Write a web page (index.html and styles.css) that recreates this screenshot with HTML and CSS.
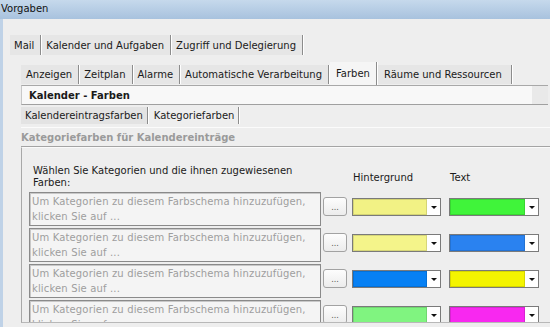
FILE: index.html
```html
<!DOCTYPE html>
<html lang="de">
  <head>
    <meta charset="UTF-8" />
    <title>Vorgaben</title>
    <link rel="stylesheet" href="styles.css">
  </head>
  <body>
    <div class="titlebar">Vorgaben</div>
    <div class="window">
      <div class="tabs tabs-main">
        <span class="tab">Mail</span>
        <span class="tab">Kalender und Aufgaben</span>
        <span class="tab">Zugriff und Delegierung</span>
      </div>
      <div class="tabs tabs-sub">
        <span class="tab">Anzeigen</span>
        <span class="tab">Zeitplan</span>
        <span class="tab">Alarme</span>
        <span class="tab">Automatische Verarbeitung</span>
        <span class="tab active">Farben</span>
        <span class="tab wide">Räume und Ressourcen</span>
      </div>
      <div class="header">Kalender - Farben</div>
      <div class="tabs tabs-third">
        <span class="tab dark">Kalendereintragsfarben</span>
        <span class="tab">Kategoriefarben</span>
      </div>
      <div class="section-label">Kategoriefarben für Kalendereinträge</div>
      <div class="panel">
        <div class="panel-head">
          <p class="intro">Wählen Sie Kategorien und die ihnen zugewiesenen Farben:</p>
          <span class="col-bg">Hintergrund</span>
          <span class="col-text">Text</span>
        </div>
        <div class="rows">
          <div class="row">
            <div class="textbox">Um Kategorien zu diesem Farbschema hinzuzufügen, klicken Sie auf ...</div>
            <button class="dots">...</button>
            <div class="combo"><span class="swatch" style="background:#f2f285"></span><span class="arrow"></span></div>
            <div class="combo"><span class="swatch" style="background:#40f43a"></span><span class="arrow"></span></div>
          </div>
          <div class="row">
            <div class="textbox">Um Kategorien zu diesem Farbschema hinzuzufügen, klicken Sie auf ...</div>
            <button class="dots">...</button>
            <div class="combo"><span class="swatch" style="background:#f4f48a"></span><span class="arrow"></span></div>
            <div class="combo"><span class="swatch" style="background:#2a82f0"></span><span class="arrow"></span></div>
          </div>
          <div class="row">
            <div class="textbox">Um Kategorien zu diesem Farbschema hinzuzufügen, klicken Sie auf ...</div>
            <button class="dots">...</button>
            <div class="combo"><span class="swatch" style="background:#0680f4"></span><span class="arrow"></span></div>
            <div class="combo"><span class="swatch" style="background:#f4f400"></span><span class="arrow"></span></div>
          </div>
          <div class="row">
            <div class="textbox">Um Kategorien zu diesem Farbschema hinzuzufügen, klicken Sie auf ...</div>
            <button class="dots">...</button>
            <div class="combo"><span class="swatch" style="background:#80f480"></span><span class="arrow"></span></div>
            <div class="combo"><span class="swatch" style="background:#f828f0"></span><span class="arrow"></span></div>
          </div>
        </div>
      </div>
    </div>
  </body>
</html>
```

FILE: styles.css
```css
body {
  margin: 0;
  font-family: "DejaVu Sans", sans-serif;
  font-size: 10px;
  color: #1a1a1a;
  background-color: #eeeeee;
  overflow: hidden;
}
.titlebar {
  height: 19px;
  line-height: 18px;
  padding-left: 1px;
  background: linear-gradient(#c6d9ec, #a8c2de);
  color: #111;
}
.window {
  height: 308px;
  border-left: 3px solid #bfd2e7;
  display: flex;
  flex-direction: column;
}
.tabs {
  display: flex;
  align-items: flex-end;
}
.tab {
  height: 19px;
  line-height: 19px;
  padding: 0 6px 0 4px;
  background-color: #e6e6e6;
  border-right: 1px solid #8c8c8c;
  box-shadow: 1px 0 0 #ffffff;
  margin-right: 1px;
  white-space: nowrap;
}
.tabs-main {
  margin: 16px 0 0 7px;
  height: 20px;
}
.tabs-main .tab {
  height: 20px;
  line-height: 21px;
}
.tabs-sub {
  margin: 7px 0 0 18px;
  height: 23px;
}
.tabs-sub .tab {
  height: 19px;
  margin-bottom: 1px;
}
.tabs-sub .tab:first-child {
  padding-left: 5px;
}
.tab.active {
  height: 23px;
  line-height: 23px;
  margin-bottom: 0;
  background-color: #f5f5f5;
  padding: 0 6px 0 6px;
}
.tab.wide {
  padding: 0 9px 0 6px;
}
.header {
  margin: 0 2px 0 18px;
  height: 18px;
  line-height: 19px;
  padding-left: 7px;
  font-weight: bold;
  border-top: 1px solid #a8a8a8;
  border-bottom: 1px solid #a0a0a0;
  border-left: 1px solid #c8c8c8;
  background: linear-gradient(to right, #f8f8f8 calc(100% - 16px), #e9e9e9 calc(100% - 16px));
}
.tabs-third {
  margin-left: 18px;
  height: 22px;
  border-bottom: 1px solid #fbfbfb;
}
.tabs-third .tab {
  height: 17px;
  line-height: 17px;
  margin-bottom: 3px;
  padding: 0 4px 0 5px;
  background-color: #eeeeee;
}
.tabs-third .tab.dark {
  padding-left: 4px;
  background-color: #e3e3e3;
}
.section-label {
  margin-left: 18px;
  height: 18px;
  line-height: 20px;
  font-weight: bold;
  color: #9a9a9a;
  border-bottom: 1px solid #a4a4a4;
}
.panel {
  margin-left: 18px;
  height: 176px;
  overflow: hidden;
  border-left: 1px solid #a8a8a8;
  border-bottom: 1px solid #b8b8b8;
  border-top: 1px solid #fafafa;
  box-sizing: border-box;
}
.panel-head {
  display: flex;
  padding: 17px 0 0 11px;
  height: 27px;
}
.intro {
  margin: 0;
  width: 290px;
  line-height: 12px;
}
.col-bg {
  margin: 7px 0 0 30px;
  line-height: 12px;
  width: 97px;
}
.col-text {
  margin-top: 7px;
  line-height: 12px;
}
.rows {
  display: flex;
  flex-direction: column;
  gap: 2px;
  padding-left: 7px;
}
.row {
  display: flex;
  align-items: flex-start;
}
.textbox {
  width: 286px;
  height: 31px;
  padding: 1px 2px 0 2px;
  line-height: 15px;
  letter-spacing: 0.15px;
  color: #9e9e9e;
  background-color: #f4f4f4;
  border: 1px solid #8a8a8a;
  box-shadow: inset 1px 1px 0 #c8c8c8;
  flex-shrink: 0;
  overflow: hidden;
}
.dots {
  margin: 5px 0 0 2px;
  width: 24px;
  height: 19px;
  padding: 0 0 3px;
  font-family: "DejaVu Sans", sans-serif;
  font-size: 8px;
  color: #555;
  border: 1px solid #a2a2a2;
  border-radius: 3px;
  background: linear-gradient(#fdfdfd, #ececec);
  line-height: 19px;
}
.combo {
  margin: 6px 0 0 5px;
  width: 87px;
  height: 16px;
  border: 1px solid #7a7a7a;
  display: flex;
  background-color: #ffffff;
}
.combo + .combo {
  margin-left: 8px;
  width: 88px;
}
.swatch {
  flex: 1;
  box-shadow: inset 0 0 0 1px rgba(0, 0, 0, 0.12);
}
.arrow {
  width: 13px;
  position: relative;
}
.arrow::after {
  content: "";
  position: absolute;
  left: 4px;
  top: 7px;
  border-left: 3px solid transparent;
  border-right: 3px solid transparent;
  border-top: 3px solid #111;
}
```
